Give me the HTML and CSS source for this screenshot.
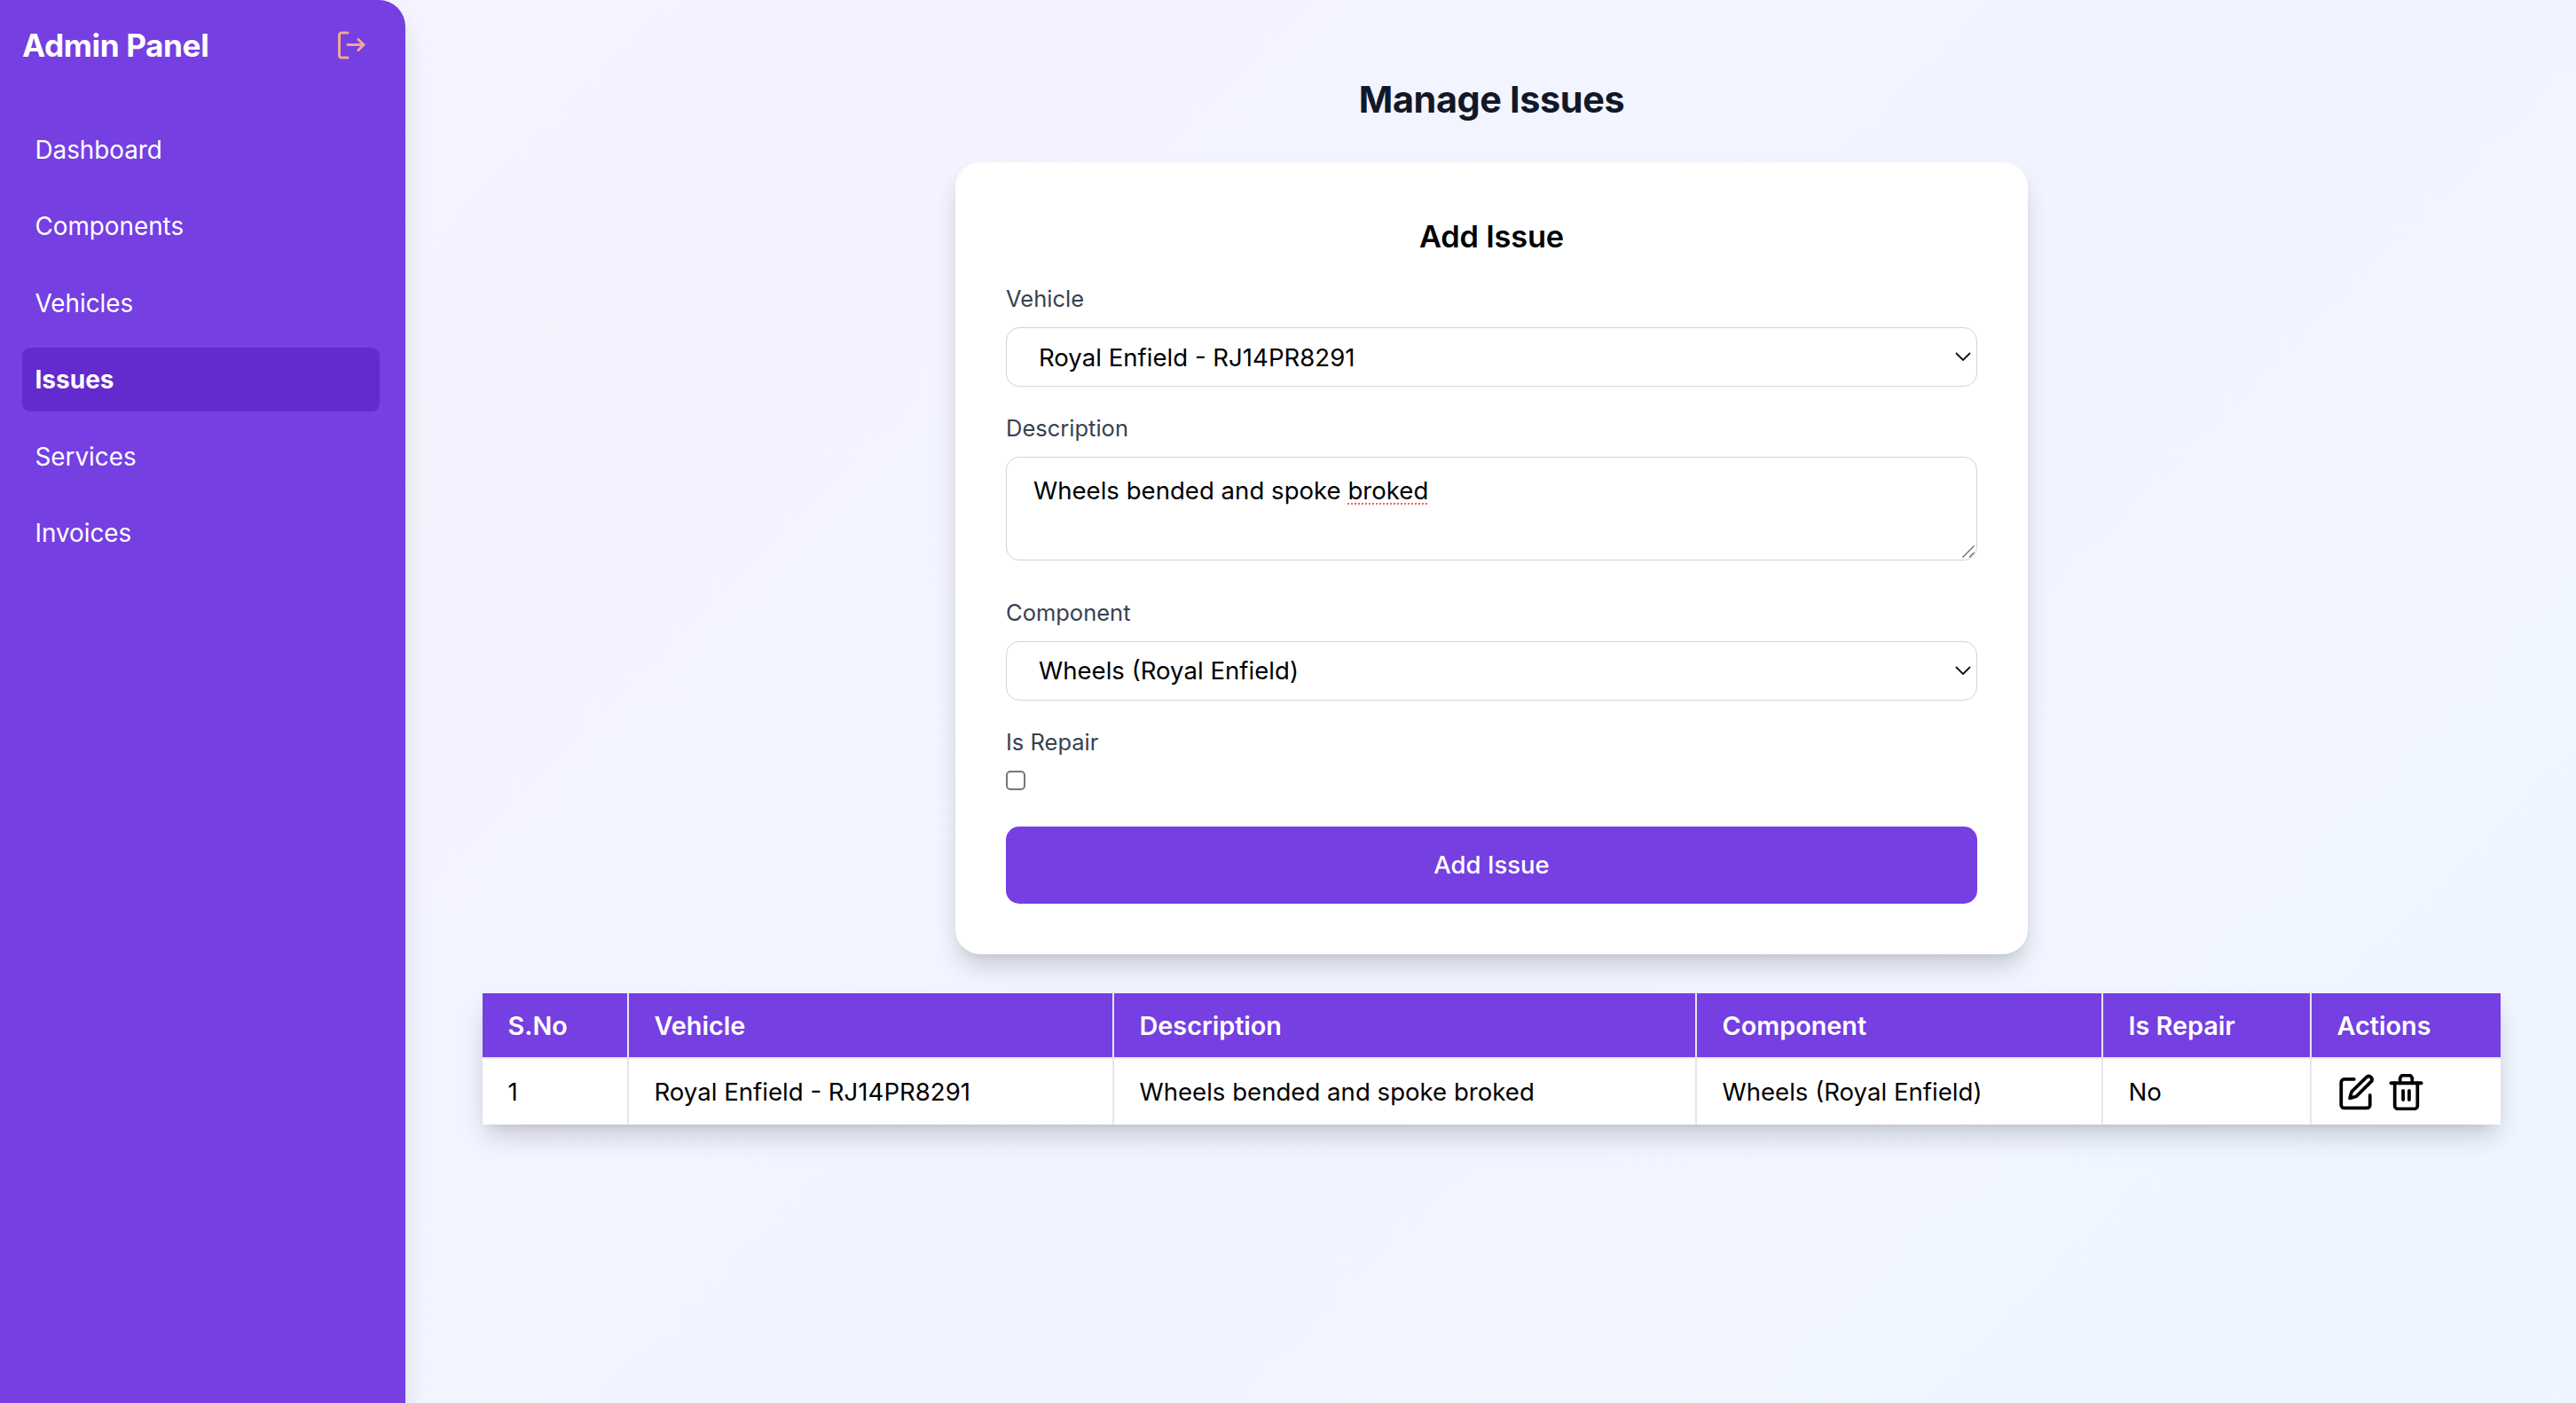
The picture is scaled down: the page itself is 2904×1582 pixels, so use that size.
FILE: index.html
```html
<!DOCTYPE html>
<html lang="en">
<head>
    <meta charset="UTF-8">
    <title>Manage Issues</title>
    <link rel="stylesheet" href="styles.css">
</head>
<body>
<div class="app">
    <aside class="sidebar">
        <div class="brand">
            <h2 class="brand-name">Admin Panel</h2>
            <svg class="logout" viewBox="0 0 32 32" fill="none" stroke="currentColor" stroke-width="3" stroke-linecap="round" stroke-linejoin="round">
                <path d="M12 2H5a2.500 2.500 0 0 0-2.500 2.500v23A2.500 2.500 0 0 0 5 30h7"/>
                <path d="M12 15.500h18"/>
                <path d="M24 9.500l6 6-6 6"/>
            </svg>
        </div>
        <ul class="nav">
            <li class="nav-item">Dashboard</li>
            <li class="nav-item">Components</li>
            <li class="nav-item">Vehicles</li>
            <li class="nav-item current">Issues</li>
            <li class="nav-item">Services</li>
            <li class="nav-item">Invoices</li>
        </ul>
    </aside>
    <main class="main">
        <h1 class="page-title">Manage Issues</h1>
        <form class="card">
            <h3 class="card-title">Add Issue</h3>
            <div class="field">
                <label class="label">Vehicle</label>
                <div class="select-box">
                    <select class="select"><option>Royal Enfield - RJ14PR8291</option></select>
                    <svg class="chevron" viewBox="0 0 18 10" fill="none" stroke="currentColor" stroke-width="1.800"><path d="M1 1l8 8 8-8"/></svg>
                </div>
            </div>
            <div class="field field-desc">
                <label class="label">Description</label>
                <div class="textarea-box">
                    <div class="textarea">Wheels bended and spoke <span class="misspelt">broked</span></div>
                    <svg class="resizer" viewBox="0 0 14 14" fill="none" stroke="#666" stroke-width="1.300"><path d="M13.500 .5L.5 13.500"/><path d="M13.500 8L8 13.500"/></svg>
                </div>
            </div>
            <div class="field">
                <label class="label">Component</label>
                <div class="select-box">
                    <select class="select"><option>Wheels (Royal Enfield)</option></select>
                    <svg class="chevron" viewBox="0 0 18 10" fill="none" stroke="currentColor" stroke-width="1.800"><path d="M1 1l8 8 8-8"/></svg>
                </div>
            </div>
            <div class="field">
                <label class="label">Is Repair</label>
                <span class="checkbox"></span>
            </div>
            <button class="submit" type="button">Add Issue</button>
        </form>
        <table class="issues">
            <thead>
                <tr>
                    <th class="col-no">S.No</th>
                    <th class="col-vehicle">Vehicle</th>
                    <th class="col-desc">Description</th>
                    <th class="col-comp">Component</th>
                    <th class="col-repair">Is Repair</th>
                    <th>Actions</th>
                </tr>
            </thead>
            <tbody>
                <tr>
                    <td>1</td>
                    <td>Royal Enfield - RJ14PR8291</td>
                    <td>Wheels bended and spoke broked</td>
                    <td>Wheels (Royal Enfield)</td>
                    <td>No</td>
                    <td>
                        <div class="actions">
                            <svg class="icon" viewBox="0 0 24 24" fill="none" stroke="currentColor" stroke-width="2.200" stroke-linecap="round" stroke-linejoin="round">
                                <path d="M11 3.500H4.500a2 2 0 0 0-2 2v15a2 2 0 0 0 2 2h15a2 2 0 0 0 2-2V14"/>
                                <path d="M19.500 1.800a2.200 2.200 0 0 1 3 3L12.500 14.800l-4.300 1.200 1.200-4.300L19.500 1.800z"/>
                            </svg>
                            <svg class="icon" viewBox="0 0 24 24" fill="none" stroke="currentColor" stroke-width="2.200" stroke-linecap="round" stroke-linejoin="round">
                                <path d="M2 6h20"/>
                                <path d="M19.500 6v15a2 2 0 0 1-2 2h-11a2 2 0 0 1-2-2V6"/>
                                <path d="M8 6V3a2 2 0 0 1 2-2h4a2 2 0 0 1 2 2v3"/>
                                <path d="M10 11v6"/>
                                <path d="M14 11v6"/>
                            </svg>
                        </div>
                    </td>
                </tr>
            </tbody>
        </table>
    </main>
</div>
</body>
</html>
```

FILE: styles.css
```css
* {
    margin: 0;
    padding: 0;
    box-sizing: border-box;
    list-style: none;
}

body {
    font-family: Inter, "Liberation Sans", sans-serif;
    color: #000;
}

.app {
    display: flex;
    height: 1582px;
    overflow: hidden;
    background: linear-gradient(135deg, #f5f3ff, #eff6ff);
}

/* sidebar */
.sidebar {
    width: 457px;
    flex-shrink: 0;
    padding: 30px 29px 0 25px;
    background: #753fe2;
    color: #fff;
    border-radius: 0 30px 0 0;
    box-shadow: 0 18px 28px rgba(0, 0, 0, 0.1);
}

.brand {
    display: flex;
    align-items: center;
    justify-content: space-between;
    padding-right: 16px;
}

.brand-name {
    font-size: 35.200px;
    line-height: 42px;
    font-weight: 700;
    letter-spacing: -0.4px;
}

.logout {
    width: 32px;
    height: 32px;
    color: #f4a598;
}

.nav {
    display: flex;
    flex-direction: column;
    gap: 14.400px;
    margin-top: 61px;
}

.nav-item {
    height: 72px;
    padding: 0 14.500px;
    line-height: 73px;
    font-size: 27.800px;
    font-weight: 400;
    border-radius: 9px;
}

.nav-item.current {
    background: #632bcd;
    font-size: 28px;
    font-weight: 700;
}

/* main column */
.main {
    flex: 1;
    min-width: 0;
    padding: 83px 85px 0 87px;
}

.page-title {
    font-size: 41.400px;
    line-height: 58px;
    font-weight: 700;
    text-align: center;
    color: #111827;
    letter-spacing: -0.4px;
}

.card {
    width: 1209px;
    height: 893px;
    margin: 42px auto 0;
    padding: 57px 57px 0;
    background: #fff;
    border-radius: 28px;
    box-shadow: 0 16px 28px -4px rgba(0, 0, 0, 0.18), 0 6px 12px -6px rgba(0, 0, 0, 0.08);
}

.card-title {
    font-size: 34.400px;
    line-height: 54px;
    font-weight: 600;
    text-align: center;
    letter-spacing: -0.2px;
}

.field {
    margin-top: 28px;
}

.card-title + .field {
    margin-top: 24px;
}

.field-desc + .field {
    margin-top: 40px;
}

.label {
    display: block;
    font-size: 25.500px;
    line-height: 37px;
    color: #374151;
    margin-bottom: 14px;
}

.select-box {
    position: relative;
}

.select {
    display: block;
    width: 100%;
    height: 67px;
    padding: 0 36px;
    appearance: none;
    border: 1px solid #cfd2d9;
    border-radius: 15px;
    background: #fff;
    font-family: inherit;
    font-size: 27.600px;
    color: #000;
}

.chevron {
    position: absolute;
    right: 7px;
    top: 28px;
    width: 18px;
    height: 10px;
    color: #111;
}

.textarea-box {
    position: relative;
}

.textarea {
    height: 116.500px;
    padding: 19px 30px;
    border: 1px solid #cfd2d9;
    border-radius: 15px;
    font-size: 27.600px;
    line-height: 36px;
}

.resizer {
    position: absolute;
    right: 3px;
    bottom: 3px;
    width: 14px;
    height: 14px;
}

.misspelt {
    text-decoration: underline dotted #f0605a;
    text-underline-offset: 4px;
    text-decoration-thickness: 2px;
}

.checkbox {
    display: block;
    width: 22px;
    height: 22px;
    border: 2px solid #767676;
    border-radius: 5px;
    background: #fff;
}

.submit {
    display: block;
    width: 100%;
    height: 87px;
    margin-top: 41px;
    border: 0;
    border-radius: 15px;
    background: #753fe2;
    color: #fff;
    font-family: inherit;
    font-size: 27.500px;
    font-weight: 500;
}

/* issues table */
.issues {
    width: 100%;
    table-layout: fixed;
    margin-top: 44px;
    border-collapse: collapse;
    background: #fff;
    font-size: 27.600px;
    box-shadow: 0 16px 28px -4px rgba(0, 0, 0, 0.18), 0 6px 12px -6px rgba(0, 0, 0, 0.08);
}

.issues th,
.issues td {
    padding: 0 28.500px;
    text-align: left;
    border: 2px solid #e5e7eb;
}

.issues tr > :first-child {
    border-left: 0;
}

.issues tr > :last-child {
    border-right: 0;
}

.issues tr:last-child td {
    border-bottom: 0;
}

.issues thead tr > * {
    border-top: 0;
}

.issues th {
    height: 73px;
    background: #753fe2;
    color: #fff;
    font-size: 28.800px;
    font-weight: 600;
}

.issues td {
    height: 75px;
}

.col-no { width: 164px; }
.col-vehicle { width: 547px; }
.col-desc { width: 657px; }
.col-comp { width: 458px; }
.col-repair { width: 235px; }

.actions {
    display: flex;
    align-items: center;
    gap: 16px;
}

.icon {
    width: 41px;
    height: 41px;
    color: #000;
}
```
